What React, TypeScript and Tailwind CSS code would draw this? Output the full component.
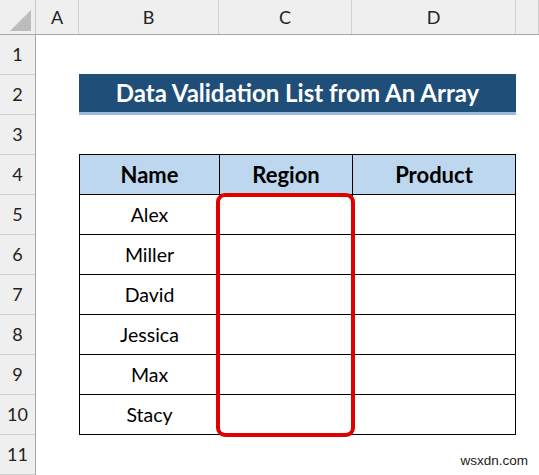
const rows = [1, 2, 3, 4, 5, 6, 7, 8, 9, 10, 11];
const names = ["Alex", "Miller", "David", "Jessica", "Max", "Stacy"];

const cols = [
  { label: "A", w: "w-[43px]" },
  { label: "B", w: "w-[140px]" },
  { label: "C", w: "w-[133px]" },
  { label: "D", w: "w-[164px]" },
  { label: "", w: "flex-1" },
];

export default function App() {
  return (
    <div className="w-[539px] h-[475px] overflow-hidden bg-white text-black font-['Lato','Liberation_Sans',sans-serif]">
      {/* column header strip */}
      <div className="flex h-[35px] bg-[#efefef] border-b border-[#a6a6a6]">
        <div className="w-[36px] border-r border-[#c8c8c8] flex items-end justify-end pr-[3px] pb-[2px]">
          <svg width="22" height="22" viewBox="0 0 22 22">
            <polygon points="21,0 21,21 0,21" fill="#bcbcbc" />
          </svg>
        </div>
        {cols.map((c) => (
          <div
            key={c.label || "e"}
            className={`${c.w} border-r border-[#d0d0d0] flex items-center justify-center text-[18px] text-[#222]`}
          >
            {c.label}
          </div>
        ))}
      </div>

      <div className="flex">
        {/* row headers */}
        <div className="w-[36px] bg-[#efefef] border-r border-[#a6a6a6]">
          {rows.map((r) => (
            <div
              key={r}
              className="h-[40px] border-b border-[#d0d0d0] flex items-center justify-center text-[18px] text-[#222]"
            >
              {r}
            </div>
          ))}
        </div>

        {/* sheet body */}
        <div className="relative flex-1 pl-[43px] pt-[39px]">
          <div className="w-[437px] h-[38px] bg-[#1f4e79] flex items-center justify-center text-white font-bold text-[24px]">
            Data Validation List from An Array
          </div>
          <div className="w-[437px] h-[3px] bg-[#9bb8e0]" />

          <div className="mt-[39px] w-[437px] border-l border-t border-black">
            <div className="flex h-[40px] bg-[#bdd7ee] font-bold text-[22px]">
              <div className="w-[140px] border-r border-b border-black flex items-center justify-center">Name</div>
              <div className="w-[133px] border-r border-b border-black flex items-center justify-center">Region</div>
              <div className="flex-1 border-r border-b border-black flex items-center justify-center">Product</div>
            </div>
            {names.map((n) => (
              <div key={n} className="flex h-[40px] text-[19.5px]">
                <div className="w-[140px] border-r border-b border-black flex items-center justify-center">{n}</div>
                <div className="w-[133px] border-r border-b border-black" />
                <div className="flex-1 border-r border-b border-black" />
              </div>
            ))}
          </div>

          {/* highlight around Region column */}
          <div className="absolute left-[180px] top-[158px] w-[139px] h-[244px] border-[4px] border-[#e10000] rounded-[9px]" />

          <div className="absolute right-[11px] bottom-[4px] text-[13.5px] text-[#222] font-['Liberation_Sans',sans-serif]">
            wsxdn.com
          </div>
        </div>
      </div>
    </div>
  );
}
